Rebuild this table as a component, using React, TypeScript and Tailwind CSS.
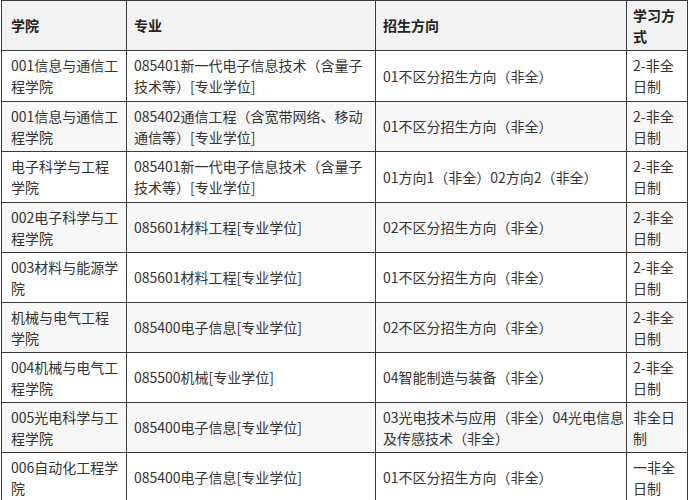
import React from "react";

type Row = { a: string[]; b: string[]; c: string[]; d: string[] };

const rows: Row[] = [
  { a: ["001信息与通信工", "程学院"], b: ["085401新一代电子信息技术（含量子", "技术等）[专业学位]"], c: ["01不区分招生方向（非全）"], d: ["2-非全", "日制"] },
  { a: ["001信息与通信工", "程学院"], b: ["085402通信工程（含宽带网络、移动", "通信等）[专业学位]"], c: ["01不区分招生方向（非全）"], d: ["2-非全", "日制"] },
  { a: ["电子科学与工程", "学院"], b: ["085401新一代电子信息技术（含量子", "技术等）[专业学位]"], c: ["01方向1（非全）02方向2（非全）"], d: ["2-非全", "日制"] },
  { a: ["002电子科学与工", "程学院"], b: ["085601材料工程[专业学位]"], c: ["02不区分招生方向（非全）"], d: ["2-非全", "日制"] },
  { a: ["003材料与能源学", "院"], b: ["085601材料工程[专业学位]"], c: ["01不区分招生方向（非全）"], d: ["2-非全", "日制"] },
  { a: ["机械与电气工程", "学院"], b: ["085400电子信息[专业学位]"], c: ["02不区分招生方向（非全）"], d: ["2-非全", "日制"] },
  { a: ["004机械与电气工", "程学院"], b: ["085500机械[专业学位]"], c: ["04智能制造与装备（非全）"], d: ["2-非全", "日制"] },
  { a: ["005光电科学与工", "程学院"], b: ["085400电子信息[专业学位]"], c: ["03光电技术与应用（非全）04光电信息", "及传感技术（非全）"], d: ["非全日", "制"] },
  { a: ["006自动化工程学", "院"], b: ["085400电子信息[专业学位]"], c: ["01不区分招生方向（非全）"], d: ["一非全", "日制"] },
];

function Cell({ lines, bold, pl }: { lines: string[]; bold?: boolean; pl: string }) {
  return (
    <div
      className={`flex items-center border-r border-b border-[#3a3a3a] ${pl} pr-1 ${bold ? "font-bold text-[#222]" : "text-[#333]"}`}
    >
      <div className="leading-[21px] whitespace-nowrap">
        {lines.map((l, i) => (
          <div key={i}>{l}</div>
        ))}
      </div>
    </div>
  );
}

export default function App() {
  return (
    <div className="w-[689px] h-[500px] overflow-hidden bg-white" style={{ fontFamily: '"Noto Sans CJK SC", "Noto Sans", sans-serif' }}>
      <div className="ml-[1px] w-[687px] border-l border-t border-[#3a3a3a] text-[14px]">
        <div className="grid grid-cols-[125px_249px_251px_61px] h-[50px] bg-[#f2f2f2]">
          <Cell lines={["学院"]} bold pl="pl-[9px]" />
          <Cell lines={["专业"]} bold pl="pl-[7px]" />
          <Cell lines={["招生方向"]} bold pl="pl-[7px]" />
          <Cell lines={["学习方", "式"]} bold pl="pl-[6px]" />
        </div>
        {rows.map((r, i) => (
          <div
            key={i}
            className={`grid grid-cols-[125px_249px_251px_61px] ${i === 0 || i === 2 ? "h-[51px]" : "h-[50px]"} ${i % 2 === 1 ? "bg-[#f7f7f7]" : "bg-white"}`}
          >
            <Cell lines={r.a} pl="pl-[9px]" />
            <Cell lines={r.b} pl="pl-[7px]" />
            <Cell lines={r.c} pl="pl-[7px]" />
            <Cell lines={r.d} pl="pl-[6px]" />
          </div>
        ))}
      </div>
    </div>
  );
}
